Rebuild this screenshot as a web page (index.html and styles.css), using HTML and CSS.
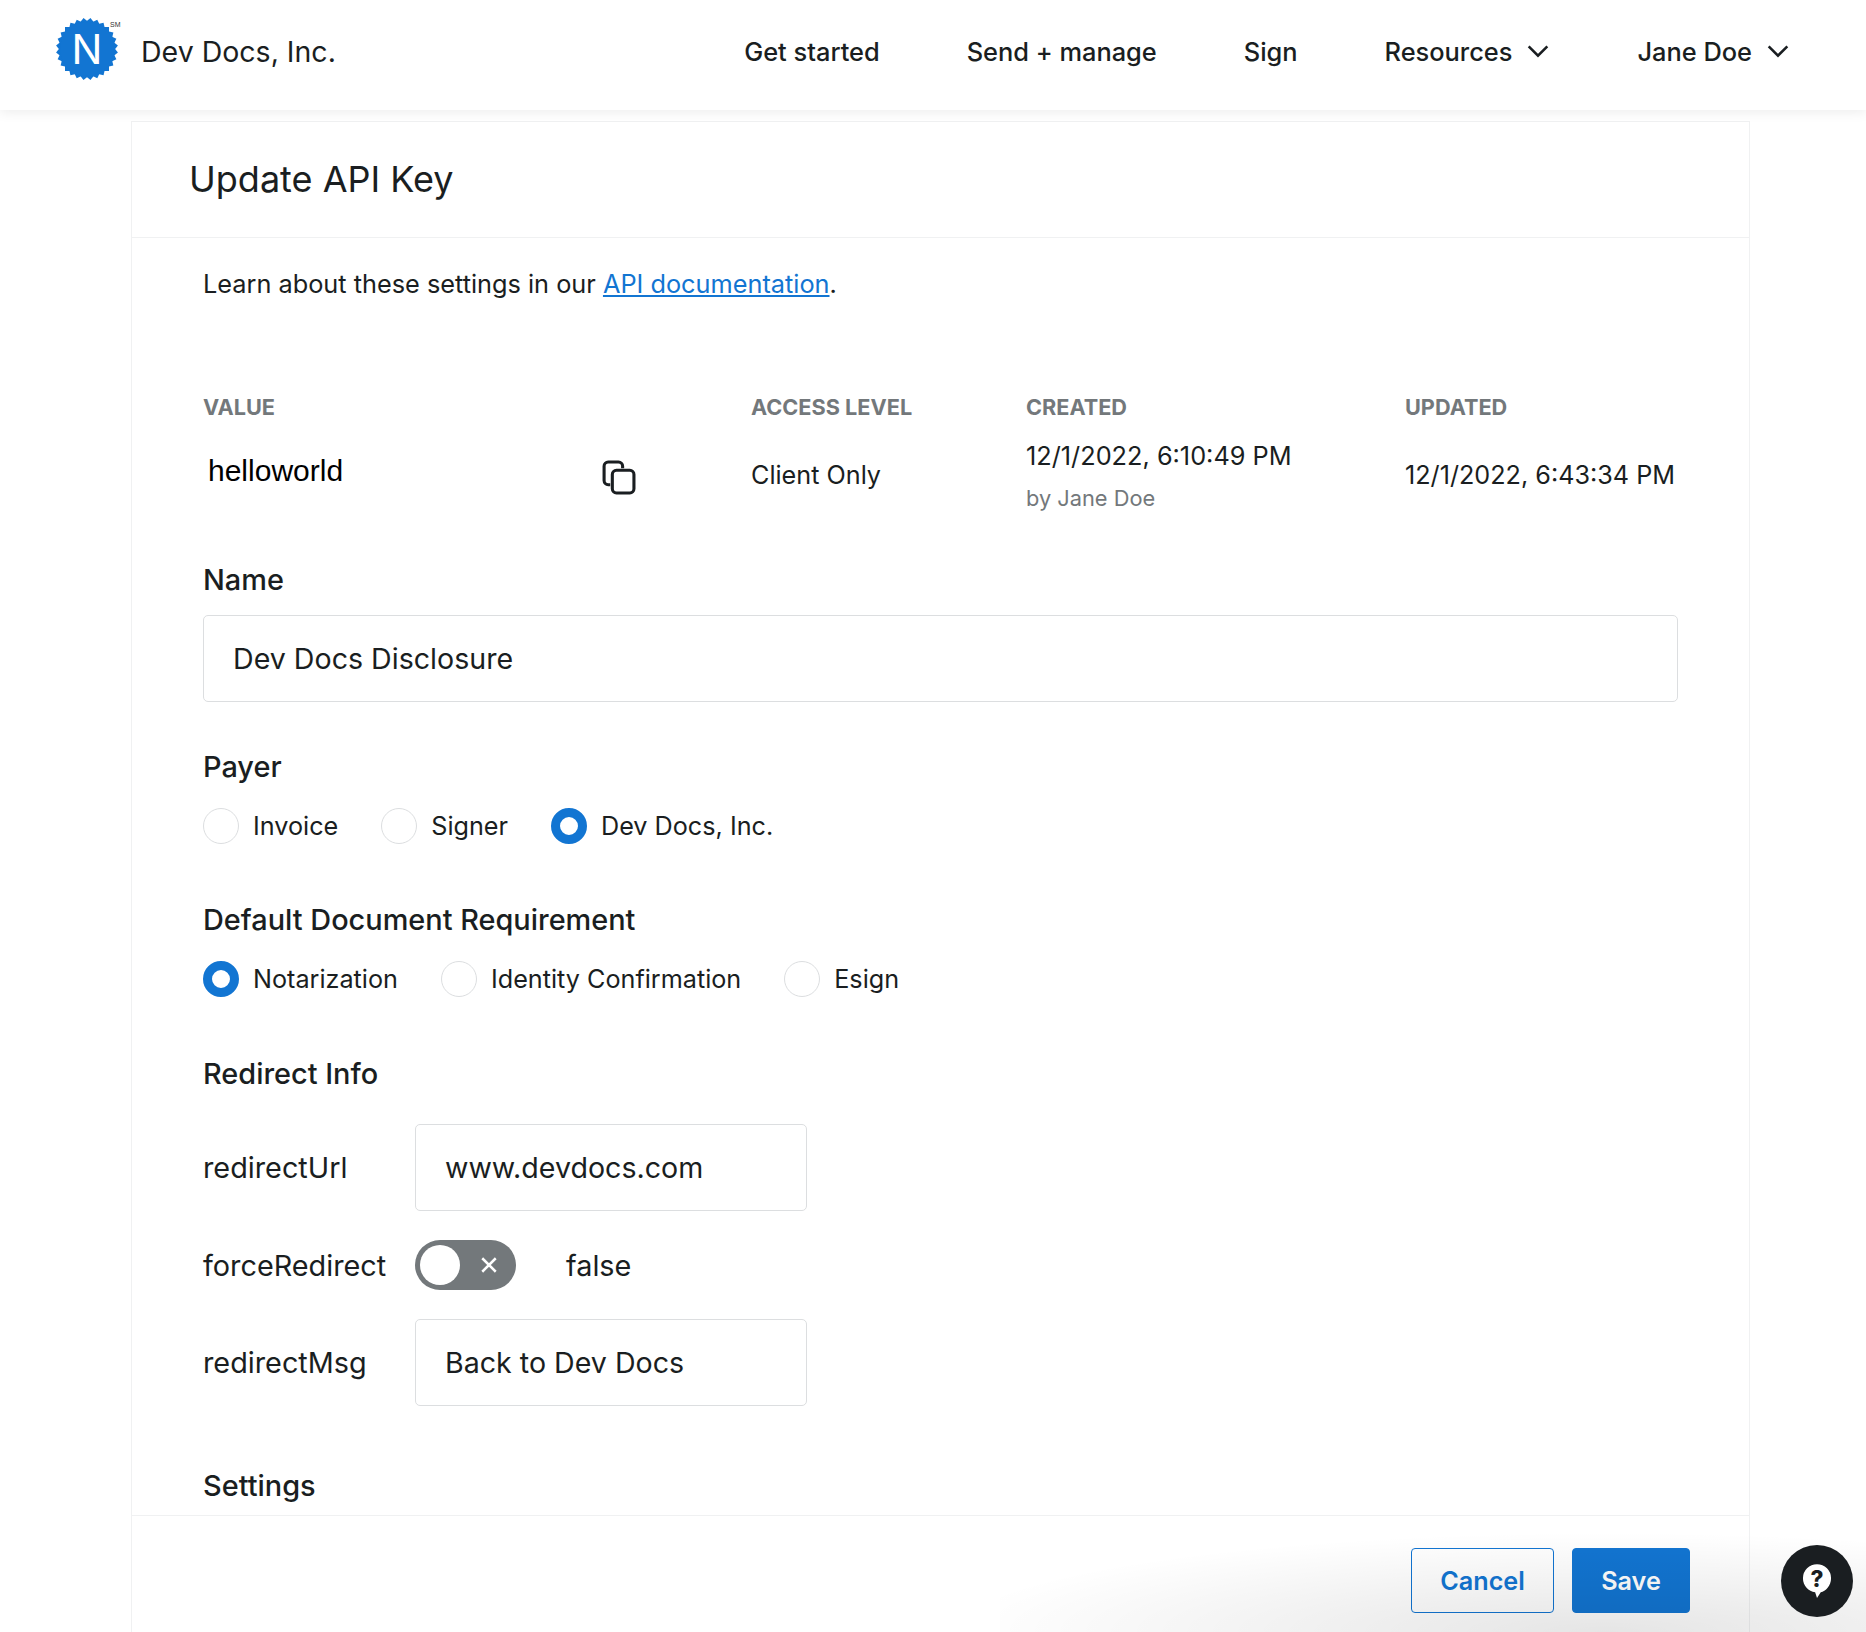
FILE: index.html
```html
<!DOCTYPE html>
<html lang="en">

<head>
  <meta charset="UTF-8">
  <meta name="viewport" content="width=device-width, initial-scale=1.0">
  <title>Update API Key</title>
  <link rel="stylesheet" href="styles.css">
</head>

<body>
  <header class="topbar">
    <div class="brand">
      <svg class="brand-logo" viewBox="0 0 66 64" aria-hidden="true">
        <g fill="#1275d2">
          <rect x="9" y="10" width="44" height="44" transform="rotate(0 31 32)"></rect>
          <rect x="9" y="10" width="44" height="44" transform="rotate(12.86 31 32)"></rect>
          <rect x="9" y="10" width="44" height="44" transform="rotate(25.71 31 32)"></rect>
          <rect x="9" y="10" width="44" height="44" transform="rotate(38.57 31 32)"></rect>
          <rect x="9" y="10" width="44" height="44" transform="rotate(51.43 31 32)"></rect>
          <rect x="9" y="10" width="44" height="44" transform="rotate(64.29 31 32)"></rect>
          <rect x="9" y="10" width="44" height="44" transform="rotate(77.14 31 32)"></rect>
          <circle cx="31" cy="32" r="27"></circle>
        </g>
        <text class="logo-n" x="31" y="47" text-anchor="middle">N</text>
        <text class="logo-sm" x="54" y="10">SM</text>
      </svg>
      <span class="brand-name">Dev Docs, Inc.</span>
    </div>
    <nav class="nav">
      <a class="nav-link">Get started</a>
      <a class="nav-link">Send + manage</a>
      <a class="nav-link">Sign</a>
      <a class="nav-link">Resources
        <svg class="chevron" viewBox="0 0 20 12"><path d="M2 2l8 8 8-8"></path></svg>
      </a>
      <a class="nav-link">Jane Doe
        <svg class="chevron" viewBox="0 0 20 12"><path d="M2 2l8 8 8-8"></path></svg>
      </a>
    </nav>
  </header>

  <main class="card">
    <h1 class="card-title">Update API Key</h1>

    <div class="card-body">
      <p class="intro">Learn about these settings in our <a class="link">API documentation</a>.</p>

      <div class="key-info">
        <div class="key-head">VALUE</div>
        <div class="key-head">ACCESS LEVEL</div>
        <div class="key-head">CREATED</div>
        <div class="key-head">UPDATED</div>

        <div class="key-value">
          <span class="key-text">helloworld</span>
          <svg class="copy-icon" viewBox="0 0 34 34">
            <path d="M9 24H7a4 4 0 0 1-4-4V6a4 4 0 0 1 4-4h10a4 4 0 0 1 4 4v2"></path>
            <rect x="11" y="10" width="21" height="22" rx="4"></rect>
          </svg>
        </div>
        <div class="key-cell">Client Only</div>
        <div class="key-created">
          <div>12/1/2022, 6:10:49 PM</div>
          <div class="key-by">by Jane Doe</div>
        </div>
        <div class="key-cell">12/1/2022, 6:43:34 PM</div>
      </div>

      <section class="field field-name">
        <h2 class="field-title">Name</h2>
        <input class="text-input" type="text" value="Dev Docs Disclosure">
      </section>

      <section class="field field-payer">
        <h2 class="field-title">Payer</h2>
        <div class="radio-row">
          <label class="radio"><span class="radio-dot"></span>Invoice</label>
          <label class="radio"><span class="radio-dot"></span>Signer</label>
          <label class="radio"><span class="radio-dot checked"></span>Dev Docs, Inc.</label>
        </div>
      </section>

      <section class="field field-doc">
        <h2 class="field-title">Default Document Requirement</h2>
        <div class="radio-row">
          <label class="radio"><span class="radio-dot checked"></span>Notarization</label>
          <label class="radio"><span class="radio-dot"></span>Identity Confirmation</label>
          <label class="radio"><span class="radio-dot"></span>Esign</label>
        </div>
      </section>

      <section class="field field-redirect">
        <h2 class="field-title">Redirect Info</h2>
        <div class="redirect-grid">
          <span>redirectUrl</span>
          <input class="text-input short" type="text" value="www.devdocs.com">

          <span>forceRedirect</span>
          <div class="toggle-wrap">
            <span class="toggle">
              <span class="toggle-thumb"></span>
              <svg class="toggle-x" viewBox="0 0 16 16"><path d="M2 2l12 12M14 2L2 14"></path></svg>
            </span>
            <span>false</span>
          </div>

          <span>redirectMsg</span>
          <input class="text-input short" type="text" value="Back to Dev Docs">
        </div>
      </section>

      <section class="field field-settings">
        <h2 class="field-title">Settings</h2>
      </section>
    </div>

    <footer class="card-footer">
      <button class="btn btn-outline">Cancel</button>
      <button class="btn btn-primary">Save</button>
    </footer>
  </main>

  <div class="bottom-glow"></div>

  <button class="help-btn" aria-label="Help">
    <svg viewBox="0 0 32 38">
      <path class="help-bubble" d="M16 1a15 15 0 0 1 15 15c0 8-6 14-11 15l-4 6-2-6C7 30 1 24 1 16A15 15 0 0 1 16 1z"></path>
      <text class="help-mark" x="16" y="25" text-anchor="middle">?</text>
    </svg>
  </button>
</body>

</html>
```

FILE: styles.css
```css
/* Base */
html,
body {
  height: 100%;
}

body {
  position: relative;
  display: flex;
  flex-direction: column;
  height: 1632px;
  margin: 0;
  overflow: hidden;
  font-family: 'Inter', 'Liberation Sans', Arial, sans-serif;
  font-size: 28.8px;
  color: #1a1e21;
  background-color: #fff;
}

/* Top bar */
.topbar {
  position: relative;
  z-index: 2;
  display: flex;
  flex-shrink: 0;
  align-items: center;
  justify-content: space-between;
  height: 110px;
  padding: 0 76px 8px 56px;
  box-sizing: border-box;
  background-color: #fff;
  box-shadow: 0 2px 12px rgba(0, 0, 0, 0.08);
}

.brand {
  display: flex;
  align-items: center;
}

.brand-logo {
  width: 66px;
  height: 64px;
  margin-right: 19px;
  margin-bottom: 5px;
}

.logo-n {
  font-family: 'Inter', Arial, sans-serif;
  font-size: 41px;
  font-weight: 400;
  fill: #fff;
}

.logo-sm {
  font-family: 'Liberation Sans', Arial, sans-serif;
  font-size: 7px;
  fill: #333;
}

.brand-name {
  font-size: 28.5px;
}

.nav {
  display: flex;
  gap: 87px;
}

.nav-link {
  display: flex;
  align-items: center;
  gap: 14px;
  font-size: 25.4px;
  font-weight: 500;
}

.chevron {
  width: 24px;
  height: 14px;
  fill: none;
  stroke: #1a1e21;
  stroke-width: 2.2;
}

/* Card */
.card {
  display: flex;
  flex: 1;
  flex-direction: column;
  width: 1619px;
  min-height: 0;
  margin: 11px 0 0 131px;
  box-sizing: border-box;
  border: 1px solid #f0f1f2;
  border-bottom: none;
}

.card-title {
  flex-shrink: 0;
  height: 116px;
  margin: 0;
  padding: 32px 57px 0;
  box-sizing: border-box;
  border-bottom: 1px solid #f0f1f2;
  font-size: 36px;
  font-weight: 400;
  line-height: 50px;
}

.card-body {
  flex: 1;
  min-height: 0;
  padding: 0 71px;
  overflow: hidden;
}

.intro {
  margin: 31px 0 0;
  font-size: 25.3px;
  line-height: 30px;
}

.link {
  color: #1275d2;
  text-decoration: underline;
}

/* Key summary */
.key-info {
  display: grid;
  grid-template-columns: 548px 275px 379px 1fr;
  grid-template-rows: 30px 110px;
  align-items: center;
  margin-top: 93px;
}

.key-head {
  font-size: 21.7px;
  font-weight: 700;
  color: #73787b;
}

.key-value {
  display: flex;
  align-items: center;
  justify-content: space-between;
  width: 428px;
  padding-left: 5px;
}

.key-text {
  margin-bottom: 12px;
  font-family: 'Liberation Sans', Arial, sans-serif;
  font-size: 30px;
  color: #000;
}

.copy-icon {
  width: 35px;
  height: 35px;
  fill: none;
  stroke: #1a1e21;
  stroke-width: 3;
}

.key-cell {
  margin-bottom: 4px;
  font-size: 25.2px;
  white-space: nowrap;
}

.key-created {
  font-size: 25.3px;
  line-height: 43px;
  white-space: nowrap;
}

.key-by {
  font-size: 21.8px;
  color: #73787b;
}

/* Form fields */
.field-title {
  margin: 0;
  font-size: 28.9px;
  font-weight: 500;
  line-height: 34px;
}

.field-name {
  margin-top: 31px;
}

.field-name .field-title {
  margin-bottom: 18px;
}

.field-payer {
  margin-top: 48px;
}

.field-doc {
  margin-top: 59px;
}

.field-redirect {
  margin-top: 60px;
}

.field-settings {
  margin-top: 63px;
}

.text-input {
  display: block;
  width: 100%;
  height: 87px;
  padding: 0 29px;
  box-sizing: border-box;
  border: 1px solid #dcdee0;
  border-radius: 5px;
  font-family: inherit;
  font-size: 28.6px;
  color: #1a1e21;
  background-color: #fff;
}

.text-input.short {
  width: 392px;
}

.radio-row {
  display: flex;
  gap: 43px;
  margin-top: 24px;
}

.radio {
  display: flex;
  align-items: center;
  gap: 14px;
  font-size: 25.2px;
  line-height: 36px;
}

.radio-dot {
  width: 36px;
  height: 36px;
  box-sizing: border-box;
  border: 1px solid #dcdee0;
  border-radius: 50%;
}

.radio-dot.checked {
  border: 9px solid #1275d2;
}

.redirect-grid {
  display: grid;
  grid-template-columns: 212px 392px;
  grid-template-rows: 87px 50px 87px;
  row-gap: 29px;
  align-items: center;
  margin-top: 33px;
}

.toggle-wrap {
  display: flex;
  align-items: center;
  gap: 50px;
}

.toggle {
  display: flex;
  align-items: center;
  justify-content: space-between;
  width: 101px;
  height: 50px;
  padding: 0 18px 0 5px;
  box-sizing: border-box;
  border-radius: 25px;
  background-color: #73787b;
}

.toggle-thumb {
  width: 40px;
  height: 40px;
  border-radius: 50%;
  background-color: #fff;
}

.toggle-x {
  width: 18px;
  height: 18px;
  fill: none;
  stroke: #fff;
  stroke-width: 2.2;
}

/* Footer */
.card-footer {
  display: flex;
  flex-shrink: 0;
  justify-content: flex-end;
  gap: 18px;
  height: 117px;
  padding: 32px 59px 0 0;
  box-sizing: border-box;
  border-top: 1px solid #f0f1f2;
}

.btn {
  height: 65px;
  box-sizing: border-box;
  border-radius: 4px;
  font-family: inherit;
  font-size: 25.2px;
  font-weight: 600;
}

.btn-outline {
  width: 143px;
  border: 1px solid #1275d2;
  color: #1275d2;
  background-color: #fff;
}

.btn-primary {
  width: 118px;
  border: 1px solid #1275d2;
  color: #fff;
  background-color: #1275d2;
}

/* Overlays */
.bottom-glow {
  position: absolute;
  z-index: 3;
  right: 0;
  bottom: 0;
  width: 866px;
  height: 110px;
  background: radial-gradient(ellipse 660px 100px at 70% 100%, rgba(0, 0, 0, 0.1), rgba(0, 0, 0, 0));
  pointer-events: none;
}

.help-btn {
  position: absolute;
  z-index: 4;
  top: 1545px;
  left: 1781px;
  display: flex;
  align-items: center;
  justify-content: center;
  width: 72px;
  height: 72px;
  padding: 0;
  border: none;
  border-radius: 50%;
  background-color: #1a1e21;
}

.help-btn svg {
  width: 30px;
  height: 36px;
}

.help-bubble {
  fill: #fff;
}

.help-mark {
  font-family: 'Inter', Arial, sans-serif;
  font-size: 24px;
  font-weight: 800;
  fill: #1a1e21;
}
```
